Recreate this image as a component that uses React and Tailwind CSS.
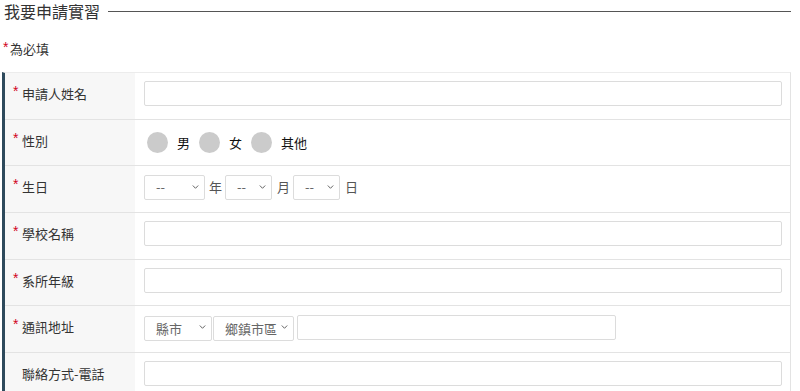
import React from 'react';

const font = { fontFamily: '"Noto Sans CJK TC", "Noto Sans", sans-serif' };

const Chevron = () => (
  <svg width="7" height="5" viewBox="0 0 7 5" className="pointer-events-none absolute right-[6px] top-1/2 -translate-y-1/2">
    <path d="M0.8 1 L3.5 3.8 L6.2 1" fill="none" stroke="#666" strokeWidth="1" />
  </svg>
);

const Select = ({ label, className }) => (
  <div className={`relative h-[25px] ${className}`}>
    <select className="h-full w-full appearance-none rounded-[2px] border border-[#dcdcdc] bg-white pl-[11px] pr-[10px] text-[13px] text-[#666] outline-none">
      <option>{label}</option>
    </select>
    <Chevron />
  </div>
);

const TextInput = ({ className = 'w-full' }) => (
  <input type="text" className={`h-[25px] rounded-[2px] border border-[#dcdcdc] bg-white px-2 text-[13px] outline-none ${className}`} />
);

const Star = ({ hidden }) => (
  <span className={`inline-block w-[9px] font-['Liberation_Sans',sans-serif] text-[14px] leading-none ${hidden ? 'text-transparent' : 'text-[#d0021b]'}`}>*</span>
);

const Row = ({ label, required = true, centered = false, children }) => (
  <div className="flex h-[46.67px] border-b border-[#e3e3e3]">
    <div className="flex w-[130px] shrink-0 items-center bg-[#f7f7f7] pb-[4px] pl-[8px] text-[13px] text-[#333]">
      <span className="self-center -mt-[6px]"><Star hidden={!required} /></span>
      <span>{label}</span>
    </div>
    <div className={`flex flex-1 items-center pl-[9px] pr-[8px] ${centered ? '' : 'pb-[4px]'}`}>{children}</div>
  </div>
);

const Radio = ({ label }) => (
  <label className="mr-[9px] flex items-center">
    <span className="mr-[9px] h-[21px] w-[21px] rounded-full bg-[#cbcbcb]" />
    <span className="text-[13px] text-[#111]">{label}</span>
  </label>
);

export default function App() {
  return (
    <div className="h-[391px] w-[800px] overflow-hidden bg-white text-[#333]" style={font}>
      <div className="flex items-center pl-[4px] pt-[1px]">
        <h1 className="text-[16px] font-normal leading-[20px] text-[#333]">我要申請實習</h1>
        <div className="ml-[8px] mr-[9px] h-px flex-1 bg-[#555]" />
      </div>
      <div className="mt-[18px] flex items-center pl-[3px] text-[13px] leading-[20px]">
        <span className="-mt-[5px]"><Star /></span>
        <span className="-ml-[2px]">為必填</span>
      </div>
      <div className="ml-[2px] mt-[13px] w-[789px] border-l-[3px] border-r border-t border-l-[#2e4a5c] border-r-[#e3e3e3] border-t-[#ececec]">
        <Row label="申請人姓名">
          <TextInput />
        </Row>
        <Row label="性別" centered>
          <div className="flex items-center pl-[3px]">
            <Radio label="男" />
            <Radio label="女" />
            <Radio label="其他" />
          </div>
        </Row>
        <Row label="生日">
          <div className="flex items-center text-[13px] text-[#555]">
            <Select label="--" className="w-[61px]" />
            <span className="ml-[4px] mr-[3px]">年</span>
            <Select label="--" className="w-[47px]" />
            <span className="ml-[5px] mr-[3px]">月</span>
            <Select label="--" className="w-[47px]" />
            <span className="ml-[5px]">日</span>
          </div>
        </Row>
        <Row label="學校名稱">
          <TextInput />
        </Row>
        <Row label="系所年級">
          <TextInput />
        </Row>
        <Row label="通訊地址">
          <div className="flex items-center">
            <Select label="縣市" className="w-[68px]" />
            <Select label="鄉鎮市區" className="ml-[1px] w-[81px]" />
            <TextInput className="ml-[3px] w-[319px]" />
          </div>
        </Row>
        <Row label="聯絡方式-電話" required={false}>
          <TextInput />
        </Row>
      </div>
    </div>
  );
}
